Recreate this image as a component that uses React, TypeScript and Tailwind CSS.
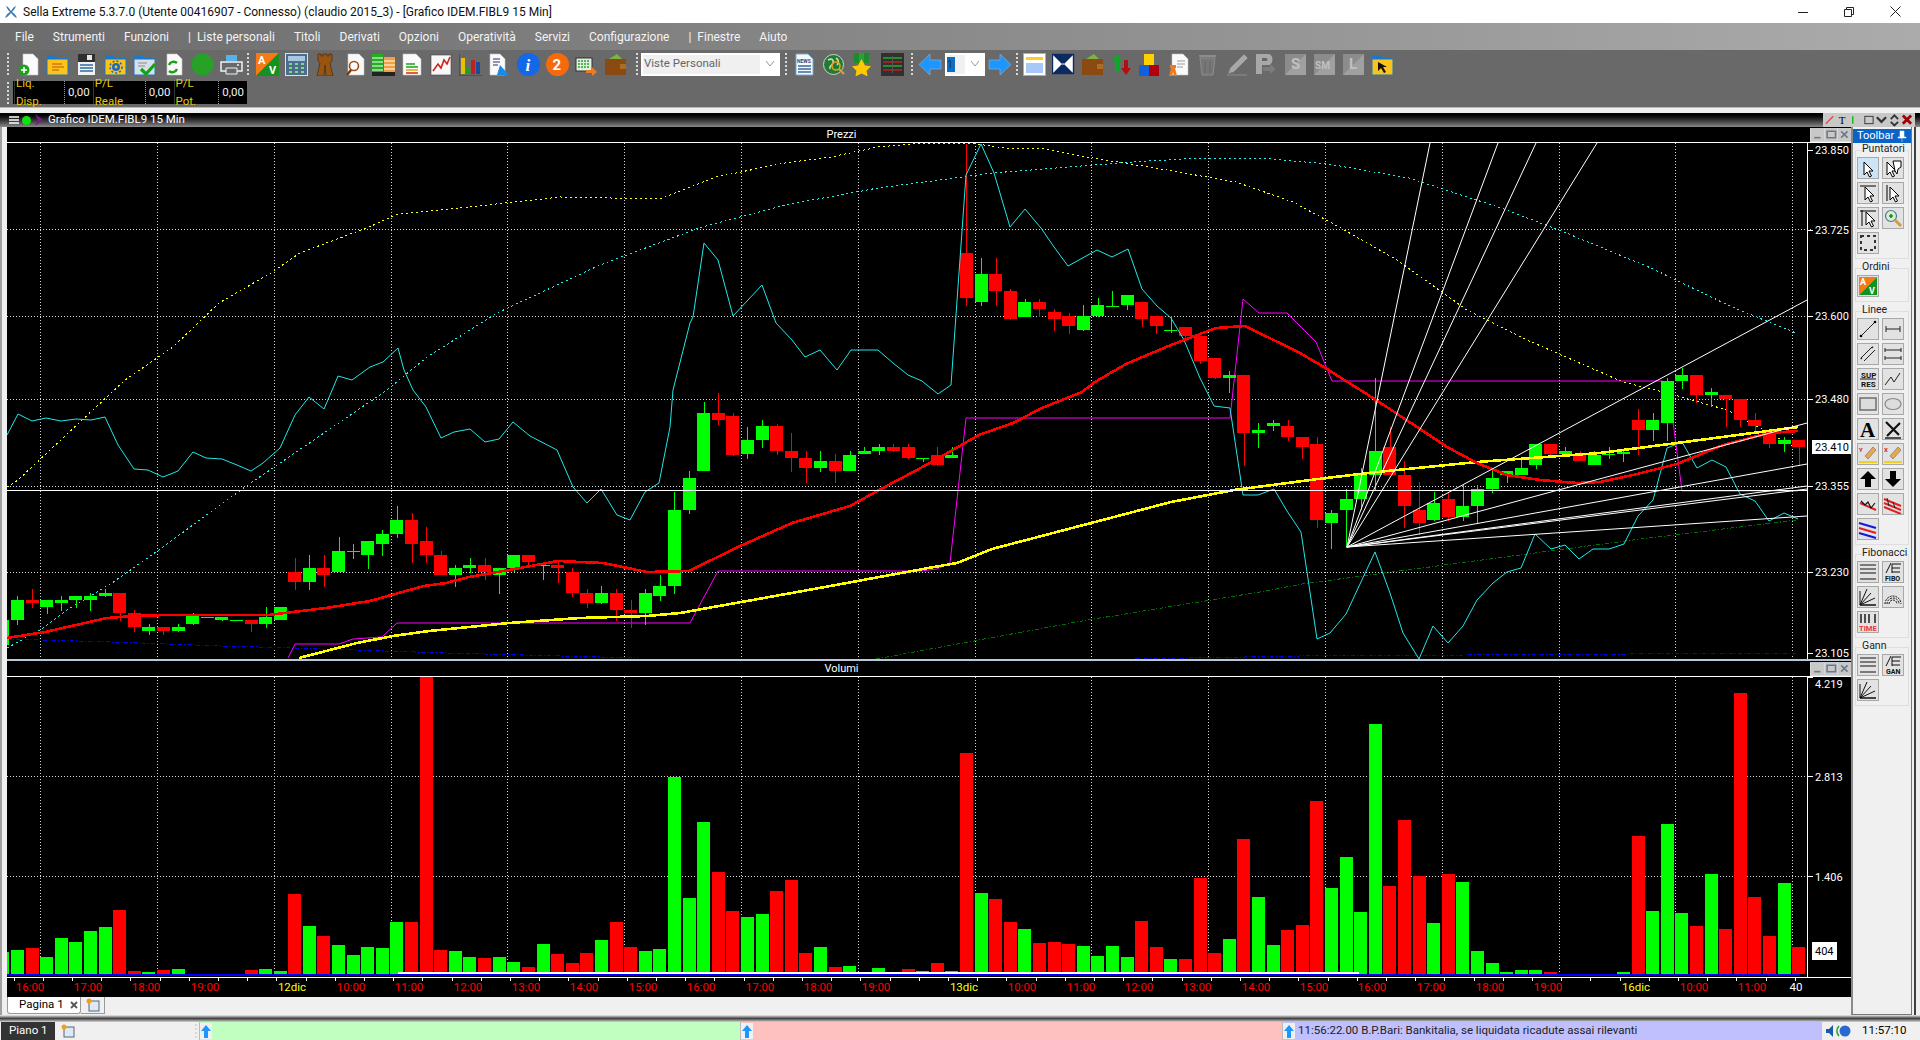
import type { ReactNode } from "react";

const GREEN = "#00ff00";
const RED = "#ff0000";

// candle rows: [green, bodyTop, bodyBottom, wickTop, wickBottom], each block measured from its own y origin
type Row = [number, number, number, number, number];

const rowsA: Row[] = [
  [1, 720, 795, 720, 795], [1, 660, 720, 648, 735], [0, 660, 669, 627, 684], [1, 660, 681, 660, 702],
  [1, 660, 669, 648, 693], [1, 648, 660, 648, 684], [1, 648, 660, 640, 693], [1, 640, 648, 627, 650],
  [0, 639, 699, 639, 723], [0, 699, 741, 690, 755], [1, 741, 753, 732, 765], [0, 741, 753, 741, 765],
  [1, 741, 753, 732, 755], [1, 702, 732, 699, 735], [1, 711, 714, 711, 714], [1, 711, 720, 711, 723],
  [1, 720, 723, 720, 723], [0, 720, 732, 720, 756], [1, 711, 732, 681, 744], [1, 681, 720, 681, 720],
  [0, 576, 606, 534, 630], [1, 564, 606, 525, 630], [0, 564, 585, 525, 621], [1, 513, 576, 471, 577],
  [1, 513, 516, 492, 537], [1, 483, 525, 483, 567], [1, 462, 492, 450, 528], [1, 420, 462, 378, 474],
  [0, 420, 492, 399, 549], [0, 483, 525, 441, 549], [0, 525, 585, 513, 585], [1, 564, 585, 555, 621],
  [1, 555, 564, 534, 579], [0, 555, 576, 534, 600], [1, 564, 585, 564, 642], [1, 525, 564, 525, 576],
  [0, 525, 546, 525, 561], [1, 555, 558, 546, 600], [0, 555, 564, 546, 609], [0, 576, 639, 564, 651],
  [0, 639, 669, 627, 684], [1, 639, 669, 618, 672], [0, 639, 690, 627, 723], [0, 690, 699, 660, 744],
  [1, 639, 699, 627, 735], [1, 618, 648, 585, 663], [1, 390, 618, 336, 642], [1, 294, 390, 273, 402],
];

const rowsB: Row[] = [
  [1, 822, 990, 790, 990], [0, 822, 842, 762, 855], [0, 830, 942, 822, 945], [1, 900, 941, 860, 955],
  [1, 859, 900, 842, 923], [0, 859, 931, 852, 942], [0, 932, 952, 880, 992], [0, 952, 981, 932, 1025],
  [1, 961, 981, 932, 992], [0, 961, 990, 941, 1025], [1, 942, 990, 932, 990], [1, 932, 941, 920, 941],
  [1, 920, 932, 910, 942], [0, 920, 932, 912, 935], [0, 920, 952, 912, 955], [1, 952, 955, 952, 962],
  [0, 942, 972, 920, 975], [1, 942, 951, 920, 950], [0, 357, 487, 40, 510], [1, 418, 498, 370, 510],
  [0, 418, 467, 370, 510], [0, 467, 549, 460, 550], [1, 499, 541, 490, 541], [0, 499, 520, 490, 543],
  [0, 528, 549, 518, 583], [0, 540, 569, 530, 592], [1, 540, 581, 508, 583], [1, 508, 540, 488, 541],
  [1, 509, 511, 467, 511], [1, 479, 508, 479, 522], [0, 499, 549, 499, 572], [0, 540, 569, 540, 592],
  [1, 581, 583, 540, 590], [0, 570, 598, 570, 610], [0, 598, 671, 598, 680], [0, 660, 720, 660, 723],
  [1, 711, 720, 700, 762], [0, 711, 880, 711, 975], [1, 871, 880, 851, 922], [1, 851, 858, 842, 873],
  [0, 859, 891, 842, 902],
];

const rowsC: Row[] = [
  [0, 292, 320, 292, 357], [0, 312, 540, 292, 563], [1, 519, 549, 510, 627], [1, 477, 510, 448, 625],
  [1, 405, 477, 385, 510], [1, 333, 405, 114, 450], [0, 321, 405, 260, 405], [0, 405, 498, 363, 564],
  [0, 510, 549, 427, 585], [1, 489, 540, 457, 543], [0, 477, 531, 456, 543], [1, 498, 531, 435, 543],
  [1, 447, 498, 436, 548], [1, 414, 447, 392, 460], [1, 393, 405, 393, 430], [1, 384, 405, 360, 405],
  [1, 312, 375, 312, 387], [0, 312, 342, 312, 348], [1, 333, 342, 321, 342], [0, 342, 363, 333, 363],
  [1, 345, 375, 333, 375], [1, 342, 345, 321, 356], [1, 336, 342, 333, 366], [0, 240, 270, 207, 345],
  [1, 240, 270, 219, 303], [1, 124, 249, 114, 303], [1, 105, 123, 84, 147], [0, 105, 165, 105, 189],
  [1, 156, 165, 144, 201], [0, 165, 177, 165, 261], [0, 177, 240, 177, 261], [0, 240, 258, 219, 276],
  [0, 282, 312, 270, 324], [1, 300, 312, 291, 336], [0, 300, 321, 300, 378],
];

const scaleRows = (rows: Row[], base: number, k: number) =>
  rows.map(([g, a, b, c, d]) => [g, base + a / k, base + b / k, base + c / k, base + d / k] as Row);

const candles = [...scaleRows(rowsA, 380, 3), ...scaleRows(rowsB, 130, 2.9), ...scaleRows(rowsC, 340, 3)];
const barX = (i: number) => 17.4 + 14.6 * i;

// volumes, first one is the clipped bar at the left edge; negative = red, 0 = no bar
const volumes = [
  876, 870, -864, 891, 834, 846, 813, 801, -750, -933, 936, -930, 927, 0, 0, 0, 0, -930, 927, 933, -702, 798, -828, 855,
  885, 861, 864, 786, -786, -50, -870, 873, 891, -894, 891, 906, -921, 852, -882, -909, -879, 840, -786, -861, 873, 867,
  351, 714, 486, -636, -753, 771, 762, -693, -660, -879, 861, -921, 918, 936, 924, -936, -927, 933, -909, 933, -279, 699,
  -717, -786, 807, -849, -846, -852, 858, 888, 858, 891, -783, -861, 897, -897, -654, -879, 837, -537, 711, 855, -810,
  -795, -423, 684, 591, 756, 192, -678, -480, -648, 789, -642, 666, 873, 909, 936, 930, 930, -936, 0, 0, 0, 0, 936, -528,
  753, 492, 759, -798, 642, -807, -99, -711, -828, 669, -861,
];

const gridX = Array.from({ length: 16 }, (_, i) => 40.6 + 116.8 * i);
const priceGrid = [229, 316.5, 399, 486, 572];
const priceTicks: [number, string][] = [
  [150, "23.850"], [230, "23.725"], [316, "23.600"], [399, "23.480"], [486, "23.355"], [572, "23.230"], [653, "23.105"],
];

const timeLabels: [number, string, string][] = [
  [30, "16:00", RED], [88, "17:00", RED], [146, "18:00", RED], [205, "19:00", RED], [292, "12dic", "#ffff00"],
  [351, "10:00", RED], [409, "11:00", RED], [468, "12:00", RED], [526, "13:00", RED], [584, "14:00", RED],
  [643, "15:00", RED], [701, "16:00", RED], [760, "17:00", RED], [818, "18:00", RED], [876, "19:00", RED],
  [964, "13dic", "#ffff00"], [1022, "10:00", RED], [1081, "11:00", RED], [1139, "12:00", RED], [1197, "13:00", RED],
  [1256, "14:00", RED], [1314, "15:00", RED], [1372, "16:00", RED], [1431, "17:00", RED], [1490, "18:00", RED],
  [1548, "19:00", RED], [1636, "16dic", "#ffff00"], [1694, "10:00", RED], [1752, "11:00", RED], [1796, "40", "#ffffff"],
];

const cyanLine =
  "7,435 18,414 32,421 46,418 61,421 76,419 91,420 105,417 118,445 134,469 148,470 163,477 178,471 193,452 206,458 222,459 237,465 251,471 263,463 280,448 295,415 309,397 324,409 333,388 338,376 352,380 370,367 383,362 398,348 404,370 413,390 426,407 441,438 454,432 470,429 485,442 499,439 513,422 530,436 557,450 573,487 587,503 601,489 617,515 630,520 645,492 659,483 670,427 673,390 690,323 693,317 704,243 718,260 733,316 762,285 776,323 792,340 805,357 820,350 837,370 851,350 878,350 893,363 908,375 922,381 938,394 951,385 966,175 981,144 994,173 1010,227 1025,209 1041,228 1054,247 1068,266 1097,250 1112,257 1128,249 1142,289 1157,306 1171,318 1184,340 1200,378 1214,406 1230,408 1243,495 1258,495 1274,489 1287,511 1301,532 1317,639 1330,633 1346,614 1375,552 1390,593 1403,633 1419,659 1433,626 1448,643 1463,626 1477,600 1493,583 1507,572 1521,568 1535,534 1551,549 1565,545 1579,559 1593,549 1609,549 1624,544 1638,516 1653,500 1667,448 1682,442 1697,468 1712,460 1726,467 1740,494 1755,501 1769,521 1784,513 1798,519";
const redLine =
  "7,638 45,632 107,618 134,616 165,615 268,615 326,608 370,601 424,586 446,583 469,577 509,570 558,561 603,563 647,572 689,571 738,547 792,523 850,506 881,489 930,463 979,435 1013,423 1042,408 1082,392 1095,382 1126,364 1171,345 1216,328 1245,326 1300,353 1327,369 1373,398 1417,427 1447,447 1477,463 1507,475 1540,480 1577,483 1600,482 1633,475 1677,464 1723,445 1769,433 1798,431";
const yellowLine =
  "299,658 357,643 393,636 429,631 509,623 580,618 647,616 680,613 814,589 934,567 957,563 992,549 1095,522 1171,502 1234,490 1318,479 1377,472 1477,462 1600,453 1677,443 1798,427";
const magentaLine =
  "288,658 295,644 339,644 353,639 382,637 397,623 690,623 718,571 921,571 937,569 950,563 966,418 1230,418 1243,299 1259,313 1287,313 1316,342 1332,381 1662,381 1668,383 1682,491 1798,491";
const yellowDots =
  "7,487 18,480 125,380 173,347 219,303 271,273 300,253 369,227 398,214 450,209 560,197 660,199 716,177 785,163 831,157 878,147 924,143 970,143 1005,148 1045,149 1074,155 1155,168 1236,182 1293,202 1339,227 1397,260 1467,310 1527,340 1623,382 1667,393 1727,410 1760,428 1793,446";
const cyanDots =
  "7,648 40,630 67,610 112,583 156,552 245,487 387,390 427,357 497,313 600,265 699,228 785,205 878,188 993,173 1132,162 1201,158 1259,158 1328,164 1409,178 1501,208 1559,230 1651,268 1732,307 1796,333";
const blueDots = "7,639 112,642 223,646 290,648 446,653 638,658 M1135,659 1300,656 1797,653";
const greenDots = "876,659 1082,621 1260,592 1302,584 1467,562 1633,540 1797,520";
const fanEnds = [
  [1430, 143], [1498, 143], [1536, 143], [1597, 143], [1807, 300], [1807, 423], [1807, 464], [1807, 486], [1807, 489], [1807, 516],
];

function PriceChart() {
  return (
    <svg width={1844} height={516} viewBox="7 143 1844 516" className="block bg-black" shapeRendering="crispEdges">
      {priceGrid.map((y) => (
        <line key={y} x1={7} x2={1813} y1={y} y2={y} stroke="#d8d8d8" strokeDasharray="1 2" />
      ))}
      {gridX.map((x) => (
        <line key={x} x1={x} x2={x} y1={143} y2={659} stroke="#d8d8d8" strokeDasharray="1 2" />
      ))}
      <polyline points={blueDots.split(" M")[0]} fill="none" stroke="#0000ff" strokeDasharray="4 2 1 2" />
      <polyline points={blueDots.split(" M")[1]} fill="none" stroke="#0000ff" strokeDasharray="4 2 1 2" />
      <polyline points={greenDots} fill="none" stroke="#007000" strokeDasharray="4 2 1 2" />
      <polyline points={yellowDots} fill="none" stroke="#ffff00" strokeDasharray="2 3" />
      <polyline points={cyanDots} fill="none" stroke="#20f0f0" strokeDasharray="2 3" />
      <polyline points={magentaLine} fill="none" stroke="#ff00ff" shapeRendering="auto" />
      {candles.map(([g, top, bot, wt, wb], n) => {
        const x = barX(n - 1);
        const color = g ? GREEN : RED;
        return (
          <g key={n}>
            <rect x={Math.round(x)} y={wt} width={1} height={wb - wt} fill={color} />
            <rect x={Math.round(x - 6.5)} y={top} width={13} height={Math.max(bot - top, 1)} fill={color} />
          </g>
        );
      })}
      <polyline points={cyanLine} fill="none" stroke="#20e8e8" strokeWidth={1} shapeRendering="auto" />
      <polyline points={yellowLine} fill="none" stroke="#ffff00" strokeWidth={2.6} />
      <polyline points={redLine} fill="none" stroke={RED} strokeWidth={2.6} />
      {fanEnds.map(([x, y]) => (
        <line key={`${x}-${y}`} x1={1347} y1={547} x2={x} y2={y} stroke="#ffffff" shapeRendering="auto" />
      ))}
      <line x1={7} x2={1807} y1={490} y2={490} stroke="#ffffff" />
      <line x1={1807} x2={1807} y1={143} y2={659} stroke="#ffffff" />
      {priceTicks.map(([y, label]) => (
        <g key={label}>
          <line x1={1807} x2={1813} y1={y} y2={y} stroke="#ffffff" />
          <text x={1815} y={y + 4} fill="#ffffff" fontSize={11} shapeRendering="auto">
            {label}
          </text>
        </g>
      ))}
      <rect x={1812} y={440} width={39} height={14} fill="#ffffff" />
      <text x={1815} y={451} fill="#000000" fontSize={11}>
        23.410
      </text>
    </svg>
  );
}

function VolumeChart() {
  return (
    <svg width={1844} height={320} viewBox="7 677 1844 320" className="block bg-black" shapeRendering="crispEdges">
      {[776, 876].map((y) => (
        <line key={y} x1={7} x2={1813} y1={y} y2={y} stroke="#d8d8d8" strokeDasharray="1 2" />
      ))}
      {gridX.map((x) => (
        <line key={x} x1={x} x2={x} y1={677} y2={973} stroke="#d8d8d8" strokeDasharray="1 2" />
      ))}
      {volumes.map((v, n) => {
        if (v === 0) return null;
        const top = 660 + Math.abs(v) / 3;
        return (
          <rect key={n} x={Math.round(barX(n - 1) - 6.5)} y={top} width={13} height={974 - top} fill={v > 0 ? GREEN : RED} />
        );
      })}
      <rect x={398} y={972} width={961} height={2} fill="#ffffff" />
      <rect x={7} y={974} width={1793} height={2} fill="#0000ff" />
      <line x1={1807} x2={1807} y1={677} y2={977} stroke="#ffffff" />
      <line x1={7} x2={1851} y1={977.5} y2={977.5} stroke="#ffffff" />
      {[[684, "4.219"], [777, "2.813"], [877, "1.406"]].map(([y, label]) => (
        <g key={label}>
          <line x1={1807} x2={1813} y1={(y as number) - (y === 684 ? 7 : 1)} y2={(y as number) - (y === 684 ? 7 : 1)} stroke="#ffffff" />
          <text x={1815} y={(y as number) + 4} fill="#ffffff" fontSize={11}>
            {label}
          </text>
        </g>
      ))}
      <rect x={1812} y={942} width={25} height={18} fill="#ffffff" />
      <text x={1815} y={955} fill="#000000" fontSize={11}>
        404
      </text>
      {Array.from({ length: 62 }, (_, i) => 14 + 29.2 * i).map((x) => (
        <line key={x} x1={x} x2={x} y1={978} y2={981} stroke="#ffffff" />
      ))}
      {timeLabels.map(([x, label, color]) => (
        <text key={`${x}${label}`} x={x} y={991} textAnchor="middle" fill={color} fontSize={11.5}>
          {label}
        </text>
      ))}
    </svg>
  );
}

function Grip({ h = 22 }: { h?: number }) {
  return <div className="w-[3px] shrink-0 border-l-2 border-dotted border-[#d8d8d8]" style={{ height: h }} />;
}

const Doc = ({ x = 4, w = 14 }: { x?: number; w?: number }) => (
  <path d={`M${x} 1h${w - 5}l5 5v16h-${w}z`} fill="#fafafa" stroke="#c8c8c8" strokeWidth="0.6" />
);

const Folder = ({ front = "#fcc419" }: { front?: string }) => (
  <>
    <path d="M1 5V2h8l2 3h10v4H1z" fill="#1c79c8" />
    <rect x="1" y="6" width="21" height="16" fill={front} stroke="#1c79c8" />
  </>
);

const Wallet = () => (
  <>
    <path d="M5 6l8-5 5 5z" fill="#7cb342" />
    <rect x="1" y="6" width="21" height="16" fill="#8b4a12" />
    <rect x="16" y="11" width="6" height="5" fill="#b06a28" />
  </>
);

const Shade = ({ c, t }: { c: string; t: string }) => (
  <>
    <rect x="1" y="1" width="21" height="21" fill="#8c8c8c" />
    <path d="M22 1v21H1z" fill="#a0a0a0" />
    <text x={t === "SM" ? 2 : 7} y="16" fontSize={t === "SM" ? 10 : 15} fontWeight={700} fill={c}>
      {t}
    </text>
  </>
);

const icons: Record<string, ReactNode> = {
  newDoc: (
    <>
      <Doc x={6} w={15} />
      <circle cx="7" cy="17" r="5.5" fill="#1fa01f" />
      <path d="M7 14v6M4 17h6" stroke="#fff" strokeWidth="1.6" />
    </>
  ),
  folder: (
    <>
      <Folder />
      <path d="M6 11h10M6 14h12M6 17h7" stroke="#d07a10" strokeWidth="1.4" />
    </>
  ),
  save: (
    <>
      <path d="M3 1h17v8H3z" fill="#2f2f2f" />
      <rect x="12" y="2" width="5" height="5" fill="#e8e8e8" />
      <rect x="3" y="9" width="17" height="13" fill="#f2f2f2" />
      <path d="M5 12h13M5 15h13M5 18h13" stroke="#2f6aa8" strokeWidth="1.6" />
    </>
  ),
  folderGear: (
    <>
      <Folder />
      <circle cx="12" cy="14" r="4" fill="#1c6ac0" />
      <circle cx="12" cy="14" r="6" fill="none" stroke="#1c6ac0" strokeWidth="1.6" strokeDasharray="2 2" />
      <circle cx="12" cy="14" r="1.4" fill="#fcc419" />
    </>
  ),
  folderCheck: (
    <>
      <Folder front="#d8dfe6" />
      <path d="M5 10h9M5 13h7" stroke="#8a8a8a" />
      <path d="M8 16l5 5 9-10" fill="none" stroke="#15a315" strokeWidth="3.2" />
    </>
  ),
  docRefresh: (
    <>
      <Doc x={5} w={15} />
      <path d="M7 12a5 5 0 0 1 8-2M15 16a5 5 0 0 1-8 2" fill="none" stroke="#15a315" strokeWidth="2.4" />
    </>
  ),
  circle: <circle cx="11.5" cy="11.5" r="11" fill="#27a127" />,
  printer: (
    <>
      <path d="M6 2h11v6H6z" fill="#5ab0e8" />
      <path d="M1 9h21v9H1z" fill="none" stroke="#eef4f8" strokeWidth="1.5" />
      <path d="M6 15h11v6H6z" fill="#6a6a6a" stroke="#eef4f8" />
      <circle cx="18" cy="12" r="1" fill="#eef4f8" />
    </>
  ),
  av: (
    <>
      <path d="M0 0h23L0 23z" fill="#f47b16" />
      <path d="M23 0v23H0z" fill="#15911f" />
      <text x="2" y="11" fontSize="11" fontWeight="700" fill="#fff">A</text>
      <text x="13" y="21" fontSize="11" fontWeight="700" fill="#fff">V</text>
    </>
  ),
  calc: (
    <>
      <rect x="0.5" y="0.5" width="22" height="22" fill="#4c6d8c" stroke="#d5e3ee" />
      <rect x="3" y="3" width="17" height="5" fill="#a8c6de" />
      <path d="M4 11h3M10 11h3M16 11h3M4 15h3M10 15h3M16 15h3M4 19h3M10 19h3M16 19h3" stroke="#7adf7a" strokeWidth="2.2" />
    </>
  ),
  tower: (
    <path d="M4 1h3v2h2V1h4v2h2V1h3v7l-2 2 3 13h-7l-1-11-1 11H3l3-13-2-2z" fill="#9a5412" stroke="#3a2208" strokeWidth="0.6" />
  ),
  docLens: (
    <>
      <Doc x={5} w={16} />
      <circle cx="11" cy="13" r="4.5" fill="#fff" stroke="#a04a10" strokeWidth="1.6" />
      <path d="M8 17l-4 5" stroke="#7a3a08" strokeWidth="2.4" />
    </>
  ),
  table: (
    <>
      <rect x="0" y="1" width="11" height="18" fill="#22b022" />
      <rect x="12" y="4" width="11" height="15" fill="#f0a040" />
      <path d="M0 5h11M0 9h11M0 13h11M0 17h11M12 8h11M12 12h11M12 16h11" stroke="#fff" />
      <rect x="0" y="19" width="23" height="4" fill="#222" />
    </>
  ),
  docLines: (
    <>
      <Doc x={2} w={18} />
      <path d="M5 11h9M5 14h12" stroke="#1fa01f" strokeWidth="1.6" />
      <path d="M5 17h12" stroke="#e8b000" strokeWidth="1.6" />
      <path d="M5 20h12" stroke="#e03020" strokeWidth="1.6" />
    </>
  ),
  lineChart: (
    <>
      <rect x="1" y="2" width="20" height="20" fill="#f8f8f8" stroke="#444" strokeWidth="0.6" />
      <path d="M3 18l5-7 3 4 3-8 3 4 3-7" fill="none" stroke="#d02020" strokeWidth="1.6" />
    </>
  ),
  bars: (
    <>
      <rect x="2" y="5" width="4" height="16" fill="#e8c000" />
      <rect x="7" y="15" width="4" height="6" fill="#1fa01f" />
      <rect x="12" y="7" width="4" height="14" fill="#c02020" />
      <rect x="17" y="9" width="4" height="12" fill="#1a4a9a" />
      <path d="M0 1v22h23" fill="none" stroke="#3a3a3a" />
    </>
  ),
  docArrow: (
    <>
      <Doc x={2} w={15} />
      <path d="M5 6h7M5 9h7M5 12h5" stroke="#2a2a6a" strokeWidth="1.2" />
      <path d="M12 12l9 10H9z" fill="#1e88e5" />
    </>
  ),
  info: (
    <>
      <circle cx="11.5" cy="11.5" r="11.5" fill="#1268e8" />
      <text x="8.5" y="18" fontSize="17" fontStyle="italic" fontWeight="700" fill="#fff" fontFamily="Liberation Serif">i</text>
    </>
  ),
  two: (
    <>
      <circle cx="11.5" cy="11.5" r="11.5" fill="#f46a0c" />
      <text x="6.5" y="17" fontSize="15" fontWeight="700" fill="#fff">2</text>
    </>
  ),
  money: (
    <>
      <rect x="1" y="5" width="16" height="13" fill="#e0f0e0" stroke="#333" />
      <path d="M3 8h12M3 11h12M3 14h12" stroke="#2aa02a" strokeWidth="1.6" strokeDasharray="2 1" />
      <path d="M11 17h6v-3l5 5-5 4v-3h-6z" fill="#f07a20" />
    </>
  ),
  wallet: <Wallet />,
  news: (
    <>
      <path d="M2 1h12l5 5v16H2z" fill="#f4f8fc" stroke="#7aa8d0" />
      <text x="3" y="10" fontSize="5" fontWeight="700" fill="#446">NEWS</text>
      <path d="M4 13h13M4 16h13M4 19h13" stroke="#3a6a98" strokeWidth="1.4" />
    </>
  ),
  globe: (
    <>
      <circle cx="10.5" cy="11.5" r="10" fill="#1f7a33" stroke="#c8d8c8" />
      <path d="M5 7c4-2 6 0 5 3s-4 2-3 6M13 5c3 2 3 5 1 7" fill="none" stroke="#d8d8b0" strokeWidth="1.6" />
      <circle cx="13" cy="13" r="4" fill="none" stroke="#e0a020" strokeWidth="1.6" />
      <path d="M16 16l5 5" stroke="#e0a020" strokeWidth="2.2" />
    </>
  ),
  medal: (
    <>
      <path d="M2 0h5v10H2zM12 0h5v10h-5z" fill="#1f8a2a" />
      <path d="M7 0h5v10H7z" fill="#2aa03a" />
      <path d="M9.5 6l3.5 6.5 6 .8-4.400 4.400 1 5.800-6.100-3-6.100 3 1-5.800L0 13.300l6-.8z" fill="#ffc800" />
    </>
  ),
  list: (
    <>
      <rect x="0" y="0" width="23" height="23" fill="#303030" />
      <path d="M2 5h19M2 13h19" stroke="#1fb01f" strokeWidth="1.6" />
      <path d="M2 9h19M2 17h19" stroke="#c02020" strokeWidth="1.6" />
      <path d="M11.500 3v17" stroke="#555" />
    </>
  ),
  back: <path d="M0 11.500L11 1v6h11v9H11v6z" fill="#1e96ff" stroke="#a8b0b8" strokeWidth="0.6" />,
  forward: <path d="M23 11.500L12 1v6H1v9h11v6z" fill="#1e96ff" stroke="#a8b0b8" strokeWidth="0.6" />,
  window: (
    <>
      <rect x="0.500" y="0.500" width="22" height="22" fill="#ffffff" stroke="#8ab4e8" />
      <rect x="3" y="4" width="17" height="3" fill="#ffcc20" />
      <rect x="3" y="10" width="17" height="10" fill="#a8c8f8" />
    </>
  ),
  mail: (
    <>
      <rect x="0.500" y="1.500" width="21" height="19" fill="#ffffff" stroke="#0a2a60" strokeWidth="1.400" />
      <path d="M1 2l10 10L21 2M1 20l10-10 10 10" fill="#0a2a60" />
    </>
  ),
  arrows: (
    <>
      <path d="M7 1l5 7H9v10H5V8H2z" fill="#0da82a" />
      <path d="M16 22l5-7h-3V7h-4v8h-3z" fill="#b01010" />
    </>
  ),
  blocks: (
    <>
      <rect x="5" y="1" width="10" height="11" fill="#ffd000" />
      <rect x="0" y="12" width="10" height="11" fill="#1060e0" />
      <rect x="10" y="12" width="10" height="11" fill="#b00010" />
    </>
  ),
  docFigure: (
    <>
      <Doc x={4} w={16} />
      <path d="M9 8h8M9 11h8M9 14h6" stroke="#999" />
      <path d="M2 12h6v3H7l2 8H6l-1-4-1 4H1l2-8H2z" fill="#f07a20" />
    </>
  ),
  trash: (
    <>
      <path d="M3 5h15l-2 17H5z" fill="#777" stroke="#8c8c8c" />
      <path d="M2 3h17" stroke="#8c8c8c" strokeWidth="2" />
      <path d="M8 8v12M13 8v12" stroke="#666" />
    </>
  ),
  pencil: (
    <>
      <path d="M18 1l4 4L8 19l-6 2 2-6z" fill="#a8a8a8" stroke="#777" />
      <path d="M1 22h20" stroke="#8c8c8c" />
    </>
  ),
  pGray: (
    <>
      <path d="M1 1h12c6 0 6 11 0 11H7v9H1z" fill="#a8a8a8" />
      <path d="M7 5h4c2 0 2 3 0 3H7z" fill="#666" />
      <path d="M8 14h7v-3l6 5-6 5v-3H8z" fill="#7c7c7c" />
    </>
  ),
  sGray: <Shade c="#c0c0c0" t="S" />,
  smGray: <Shade c="#c0c0c0" t="SM" />,
  lGray: <Shade c="#c0c0c0" t="L" />,
  folderArrow: (
    <>
      <Folder />
      <path d="M7 9v9l3-3 3 5 2-1-3-5h4z" fill="#111" />
    </>
  ),
};

function Tool({ name }: { name: string }) {
  return (
    <div className="flex h-[24px] w-[29px] shrink-0 items-center justify-center">
      <svg width={23} height={23} viewBox="0 0 23 23">
        {icons[name]}
      </svg>
    </div>
  );
}

function Combo({ label, wide }: { label: string; wide?: boolean }) {
  return (
    <div className={`flex h-[23px] shrink-0 items-center bg-white pl-[2px] ${wide ? "w-[139px]" : "w-[40px]"}`}>
      <div className={`flex h-[19px] flex-1 items-center bg-[#f0f0f0] text-[11.5px] text-[#666] ${wide ? "pl-[1px]" : ""}`}>
        {wide ? label : <span className="h-[15px] w-[8px] bg-[#0870c8] text-[11px] leading-[15px] text-[#333]">{label}</span>}
      </div>
      <svg width={20} height={10} viewBox="0 0 20 10" className="shrink-0">
        <path d="M6 2l4 5 4-5" fill="none" stroke="#999" />
      </svg>
    </div>
  );
}

function StripCell({ label, value }: { label: string; value: string }) {
  return (
    <>
      <div className="flex h-full items-center border-l border-[#303a3a] pl-[1px] pr-[4px] text-[#e8c800]">{label}</div>
      <div className="flex h-full items-center border-l border-dotted border-[#999] px-[3px] text-[#f0f0f0]">{value}</div>
    </>
  );
}

const Pointer = ({ x = 0 }: { x?: number }) => (
  <path
    transform={`translate(${x} 0)`}
    d="M6 4v13l3-3 2.500 5 2-1-2.500-5h4z"
    fill="#fff"
    stroke="#000"
    strokeWidth="1"
  />
);

const panel: Record<string, ReactNode> = {
  pointer: <Pointer />,
  pointerTip: (
    <>
      <Pointer x={-2} />
      <path d="M10 3h8v6l-3 2-1 5-2-3z" fill="#fff" stroke="#000" />
    </>
  ),
  pointerTop: (
    <>
      <path d="M2 3h16" stroke="#000" />
      <Pointer x={1} />
    </>
  ),
  pointerLeft: (
    <>
      <path d="M4 2v16" stroke="#000" />
      <Pointer x={1} />
    </>
  ),
  pointerCorner: (
    <>
      <path d="M2 3h16M4 2v16" stroke="#000" />
      <Pointer x={2} />
    </>
  ),
  zoom: (
    <>
      <circle cx="8" cy="8" r="5.500" fill="#d8ecd8" stroke="#4a7a90" strokeWidth="1.200" />
      <path d="M6 8h4M8 6v4" stroke="#109010" strokeWidth="1.600" />
      <path d="M12 12l6 6" stroke="#d89a40" strokeWidth="3" />
    </>
  ),
  select: <rect x="3" y="3" width="14" height="14" fill="none" stroke="#333" strokeWidth="2" strokeDasharray="3 3" />,
  av: (
    <>
      <path d="M1 1h18L1 19z" fill="#f47b16" />
      <path d="M19 1v18H1z" fill="#15911f" />
      <text x="2" y="9" fontSize="9" fontWeight="700" fill="#fff">A</text>
      <text x="11" y="18" fontSize="9" fontWeight="700" fill="#fff">V</text>
    </>
  ),
  line: (
    <>
      <path d="M3 17L17 3" stroke="#222" />
      <circle cx="3" cy="17" r="1.300" fill="#000" />
      <circle cx="17" cy="3" r="1.300" fill="#000" />
    </>
  ),
  hline: <path d="M3 10h14M3 7v6M17 7v6" stroke="#222" fill="none" />,
  channel: (
    <>
      <path d="M3 14L14 3M6 17L17 6" stroke="#222" />
      <path d="M3 14l3 3M14 3l3 3" stroke="#000" strokeWidth="2" strokeDasharray="1 4" />
    </>
  ),
  hchannel: <path d="M2 6h16M2 14h16M2 4v4M18 4v4M2 12v4M18 12v4" stroke="#222" fill="none" />,
  supres: (
    <>
      <text x="3" y="9" fontSize="8" fontWeight="700" fill="#111">SUP</text>
      <path d="M2 10h16" stroke="#111" />
      <text x="3" y="18" fontSize="8" fontWeight="700" fill="#111">RES</text>
    </>
  ),
  zig: <path d="M2 16l6-8 3 5 6-9" fill="none" stroke="#222" />,
  rect: <rect x="2" y="4" width="16" height="12" fill="#dcdcdc" stroke="#666" strokeWidth="1.400" />,
  ellipse: <ellipse cx="10" cy="10" rx="8" ry="5.500" fill="#dcdcdc" stroke="#888" strokeWidth="1.200" />,
  bigA: <text x="2" y="18" fontSize="21" fontWeight="900" fill="#000" fontFamily="Liberation Serif">A</text>,
  cross: (
    <>
      <path d="M3 3l13 13M17 4L4 17" stroke="#111" strokeWidth="2.200" />
      <path d="M2 19h16" stroke="#111" strokeWidth="1.400" />
    </>
  ),
  eraseY: (
    <>
      <path d="M7 12l8-9 3 3-8 9z" fill="#e8a850" stroke="#555" strokeWidth="0.500" />
      <path d="M1 18h18" stroke="#f0d020" strokeWidth="2" />
      <text x="1" y="8" fontSize="6" fontWeight="700" fill="#d02020">Y</text>
    </>
  ),
  eraseX: (
    <>
      <path d="M7 12l8-9 3 3-8 9z" fill="#e8a850" stroke="#555" strokeWidth="0.500" />
      <path d="M1 18h18" stroke="#f0d020" strokeWidth="2" />
      <text x="1" y="8" fontSize="6" fontWeight="700" fill="#d02020">X</text>
    </>
  ),
  up: <path d="M10 2l8 8h-5v8H7v-8H2z" fill="#000" />,
  down: <path d="M10 18l8-8h-5V2H7v8H2z" fill="#000" />,
  wave: (
    <>
      <path d="M2 9l16 7" stroke="#e02020" strokeWidth="2" />
      <path d="M3 7l4 4 3-3 3 6 4-5" fill="none" stroke="#111" strokeWidth="1.200" />
    </>
  ),
  redBands: (
    <>
      <path d="M1 5l17 7M1 9l17 7M1 13l17 7" stroke="#e02020" strokeWidth="2" />
      <path d="M4 4l2 8M10 8l2 6" stroke="#222" />
    </>
  ),
  blueBands: (
    <>
      <path d="M1 4l17 5M1 14l17 5" stroke="#1018e0" strokeWidth="2" />
      <path d="M1 9l17 5" stroke="#e02020" strokeWidth="2" />
    </>
  ),
  levels: <path d="M2 3h16M2 7h16M2 11h16M2 17h16" stroke="#111" />,
  fibo: (
    <>
      <path d="M3 11L8 1M9 2v9M9 2h9M9 6h8M9 10h8" stroke="#111" fill="none" />
      <text x="2" y="19" fontSize="7" fontWeight="700" fill="#111">FIBO</text>
    </>
  ),
  gan: (
    <>
      <path d="M3 11L8 1M9 2v9M9 2h9M9 6h8M9 10h8" stroke="#111" fill="none" />
      <text x="3" y="19" fontSize="7" fontWeight="700" fill="#111">GAN</text>
    </>
  ),
  fan: <path d="M2 18L9 2M2 18l11-12M2 18l15-7M2 18h16M2 18h16M2 4v14" stroke="#111" fill="none" />,
  arcs: <path d="M2 17a8 8 0 0 1 16 0M4 17a6 6 0 0 1 12 0M6 17a4 4 0 0 1 8 0" stroke="#111" fill="none" strokeDasharray="2 1" />,
  time: (
    <>
      <path d="M3 2v9M7 2v9M11 2v9M17 2v9" stroke="#111" strokeWidth="1.400" />
      <text x="1" y="19" fontSize="7.500" fontWeight="700" fill="#f03040">TIME</text>
    </>
  ),
};

function PanelButton({ name, active }: { name: string; active?: boolean }) {
  return (
    <div
      className={`flex h-[22px] w-[22px] items-center justify-center border border-[#a8a8a8] ${
        active ? "border-[#2a70c0] bg-[#cde4f7]" : "bg-[#e2e2e2]"
      }`}
    >
      <svg width={20} height={20} viewBox="0 0 20 20">
        {panel[name]}
      </svg>
    </div>
  );
}

function Group({ title, names, active }: { title: string; names: string[]; active?: string }) {
  return (
    <fieldset className="mb-[2px] ml-[2px] mr-[2px] border border-[#dedede] pb-[4px] pl-[1px]">
      <legend className="ml-[5px] h-[14px] text-[10.5px] leading-[12px] text-[#222]">{title}</legend>
      <div className="grid grid-cols-[22px_22px] gap-[3px]">
        {names.map((n) => (
          <PanelButton key={n} name={n} active={n === active} />
        ))}
      </div>
    </fieldset>
  );
}

function ChartHeader({ title }: { title: string }) {
  return (
    <div className="flex h-[16px] items-center border-b border-white bg-black text-[11px] text-white">
      <div className="flex-1 pr-[134px] text-center leading-[14px]">{title}</div>
      <div className="flex h-[14px] w-[41px] gap-[1px] bg-[#d8d8d8] pl-[1px]">
        {["M3 9h6", "M2 3h8v6H2z", "M3 3l6 6M9 3l-6 6"].map((d) => (
          <svg key={d} width={13} height={13} viewBox="0 0 12 12" className="bg-[#c8c8c8]">
            <path d={d} fill="none" stroke="#6a7a8a" strokeWidth="1.500" />
          </svg>
        ))}
      </div>
    </div>
  );
}

const menuItems: [string, number][] = [
  ["File", 15], ["Strumenti", 19], ["Funzioni", 19], ["|", 19], ["Liste personali", 6], ["Titoli", 19], ["Derivati", 19],
  ["Opzioni", 19], ["Operatività", 19], ["Servizi", 19], ["Configurazione", 19], ["|", 19], ["Finestre", 6], ["Aiuto", 19],
];

export default function App() {
  return (
    <div className="flex h-[1040px] w-[1920px] flex-col overflow-hidden bg-[#f0f0f0] font-['Roboto',sans-serif] text-[12px]">
      {/* title bar */}
      <div className="flex h-[23px] shrink-0 items-center bg-white text-[#111]">
        <svg width={16} height={16} viewBox="0 0 16 16" className="ml-[3px] mr-[4px]">
          <path d="M3 2c3 1 4 4 5 5 1-1 2-4 5-5-1 3-3 5-4 6 2 1 4 3 5 6-3-1-5-4-6-5-1 1-3 4-6 5 1-3 3-5 5-6-1-1-3-3-4-6z" fill="#3a7ab8" />
        </svg>
        <span>Sella Extreme 5.3.7.0 (Utente 00416907 - Connesso) (claudio 2015_3) - [Grafico IDEM.FIBL9 15 Min]</span>
        <div className="ml-auto mr-[2px] flex">
          <div className="flex h-[23px] w-[46px] items-center justify-center">
            <svg width={10} height={10}><path d="M0 5.500h10" stroke="#222" /></svg>
          </div>
          <div className="flex h-[23px] w-[46px] items-center justify-center">
            <svg width={10} height={10}><path d="M.5 2.500h7v7h-7zM2.500 2.500v-2h7v7h-2" fill="none" stroke="#222" /></svg>
          </div>
          <div className="flex h-[23px] w-[46px] items-center justify-center">
            <svg width={11} height={11}><path d="M.5.500l10 10M10.500.500l-10 10" stroke="#222" /></svg>
          </div>
        </div>
      </div>

      {/* menu */}
      <div className="flex h-[27px] shrink-0 items-center bg-linear-to-r from-[#6c6c6c] to-[#ababab] text-[#f4f4f4]">
        {menuItems.map(([label, gap], i) => (
          <span key={i} style={{ marginLeft: gap }}>
            {label}
          </span>
        ))}
      </div>

      {/* toolbars */}
      <div className="flex h-[57px] shrink-0 flex-col bg-[#696969] pt-[1px]">
        <div className="flex h-[26px] items-center pl-[7px]">
          <Grip />
          <div className="ml-[4px] flex">
            {["newDoc", "folder", "save", "folderGear", "folderCheck", "docRefresh", "circle", "printer"].map((n) => (
              <Tool key={n} name={n} />
            ))}
          </div>
          <div className="ml-[1px] mr-[3px]"><Grip /></div>
          <div className="flex">
            {["av", "calc", "tower", "docLens", "table", "docLines", "lineChart", "bars", "docArrow", "info", "two", "money", "wallet"].map((n) => (
              <Tool key={n} name={n} />
            ))}
          </div>
          <div className="ml-[6px] mr-[2px]"><Grip /></div>
          <Combo label="Viste Personali" wide />
          <div className="ml-[5px] mr-[1px]"><Grip /></div>
          <div className="ml-[2px] flex">
            {["news", "globe", "medal", "list"].map((n) => (
              <Tool key={n} name={n} />
            ))}
          </div>
          <div className="ml-[4px] mr-[2px]"><Grip /></div>
          <Tool name="back" />
          <Combo label="1" />
          <Tool name="forward" />
          <div className="ml-[2px] mr-[1px]"><Grip /></div>
          <div className="flex">
            {["window", "mail", "wallet", "arrows", "blocks", "docFigure", "trash", "pencil", "pGray", "sGray", "smGray", "lGray", "folderArrow"].map((n, i) => (
              <Tool key={`${n}${i}`} name={n} />
            ))}
          </div>
        </div>
        <div className="mt-[4px] flex h-[23px] items-center pl-[7px]">
          <Grip />
          <div className="ml-[3px] flex h-[23px] w-[234px] items-center bg-black pl-[1px] text-[11.5px]">
            <StripCell label="Liq. Disp." value="0,00" />
            <StripCell label="P/L Reale" value="0,00" />
            <StripCell label="P/L Pot." value="0,00" />
          </div>
        </div>
      </div>

      {/* document window */}
      <div className="flex min-h-0 flex-1 flex-col border-t border-[#b8b8b8] pt-[5px]">
        <div className="flex h-[14px] shrink-0 items-center bg-linear-to-b from-black to-[#8a8a8a] pl-[9px] text-[11.5px] text-white">
          <svg width={10} height={11}><path d="M0 2h10M0 5h10M0 8h10" stroke="#fff" strokeWidth="1.300" /></svg>
          <span className="ml-[3px] h-[9px] w-[9px] rounded-full bg-[#10e010]" />
          <svg width={10} height={12} viewBox="0 0 10 12" className="ml-[3px]"><path d="M1 0l8 6-8 6 3-6z" fill="#7a1a8a" /></svg>
          <span className="ml-[4px]">Grafico IDEM.FIBL9 15 Min</span>
          <div className="ml-auto mr-[5px] flex w-[92px] items-center justify-between bg-[#c8c8c8] px-[1px]">
            {[
              <path key="a" d="M2 11l8-8" stroke="#f04040" strokeWidth="1.400" />,
              <text key="b" x="2" y="11" fontSize="12" fontFamily="Liberation Serif" fill="#000">T</text>,
              <path key="c" d="M3 3v8" stroke="#10c010" strokeWidth="1.600" />,
              <rect key="d" x="2" y="3" width="9" height="8" fill="none" stroke="#333" />,
              <path key="e" d="M2 4l5 5 5-5" fill="none" stroke="#333" strokeWidth="2.400" />,
              <path key="f" d="M3 6l4-4 4 4M3 9l4 4 4-4" fill="none" stroke="#333" strokeWidth="2" />,
              <path key="g" d="M2 2l9 9M11 2l-9 9" stroke="#a00000" strokeWidth="3" />,
            ].map((p, i) => (
              <svg key={i} width={13} height={14} viewBox="0 0 14 14">{p}</svg>
            ))}
          </div>
        </div>

        <div className="flex min-h-0 flex-1">
          <div className="w-[7px] shrink-0 border-l-2 border-[#a0a0a0] bg-[#f0f0f0]" />
          <div className="flex w-[1844px] shrink-0 flex-col">
            <ChartHeader title="Prezzi" />
            <PriceChart />
            <div className="h-[2px] bg-[#b8c8d8]" />
            <ChartHeader title="Volumi" />
            <VolumeChart />
            <div className="flex h-[18px] items-start text-[11.5px] text-black">
              <div className="flex h-[17px] w-[74px] items-center gap-[6px] rounded-b-[3px] border-x border-b border-[#999] bg-white pl-[11px]">
                Pagina 1
                <svg width={8} height={8}><path d="M1 1l6 6M7 1l-6 6" stroke="#555" strokeWidth="1.800" /></svg>
              </div>
              <div className="flex h-[17px] w-[24px] items-center justify-center border-b border-r border-[#999]">
                <svg width={14} height={14}>
                  <rect x="3" y="3" width="10" height="10" fill="#dfe9f2" stroke="#567" />
                  <circle cx="3" cy="3" r="2.500" fill="#f0a020" />
                </svg>
              </div>
            </div>
          </div>

          {/* drawing tools */}
          <div className="flex w-[61px] shrink-0 flex-col border-l-2 border-[#8a8a8a] border-b border-b-[#777] border-r border-r-[#777]">
            <div className="mt-[2px] flex h-[14px] shrink-0 items-center justify-between bg-[#0a64c8] px-[4px] text-[11px] text-white">
              Toolbar
              <svg width={10} height={12}><path d="M3 1h4v6h2v1H1V7h2zM5 8v4" fill="#fff" stroke="#fff" strokeWidth="0.500" /></svg>
            </div>
            <Group title="Puntatori" active="pointer" names={["pointer", "pointerTip", "pointerTop", "pointerLeft", "pointerCorner", "zoom", "select"]} />
            <Group title="Ordini" names={["av"]} />
            <Group
              title="Linee"
              names={["line", "hline", "channel", "hchannel", "supres", "zig", "rect", "ellipse", "bigA", "cross", "eraseY", "eraseX", "up", "down", "wave", "redBands", "blueBands"]}
            />
            <Group title="Fibonacci" names={["levels", "fibo", "fan", "arcs", "time"]} />
            <Group title="Gann" names={["levels", "gan", "fan"]} />
          </div>
          <div className="ml-[2px] w-[2px] shrink-0 bg-[#404040]" />
        </div>

        <div className="h-[7px] shrink-0 bg-linear-to-b from-[#f0f0f0] via-[#444] to-[#d8d8d8]" />
      </div>

      {/* status bar */}
      <div className="flex h-[18px] shrink-0 items-center bg-[#f0f0f0] text-[11.5px]">
        <div className="ml-[1px] flex h-[18px] w-[54px] items-center bg-[#333] pl-[8px] text-white">Piano 1</div>
        <svg width={14} height={14} className="ml-[6px]">
          <rect x="3" y="3" width="10" height="10" fill="#dfe9f2" stroke="#567" />
          <circle cx="3" cy="3" r="2.500" fill="#f0a020" />
        </svg>
        <div className="ml-[120px] mr-[1px]"><Grip h={14} /></div>
        <Ticker className="w-[541px] bg-[#c0ffc0]" />
        <Ticker className="w-[542px] bg-[#ffc0c0]" />
        <Ticker className="w-[540px] bg-[#c0c0ff]" text="11:56:22.00 B.P.Bari: Bankitalia, se liquidata ricadute assai rilevanti" />
        <svg width={28} height={14} viewBox="0 0 28 14" className="ml-[3px]">
          <path d="M1 5h3l4-4v12l-4-4H1z" fill="#1a5aa8" />
          <circle cx="20" cy="7" r="5.500" fill="#2a6ad0" />
          <path d="M14 2a7 7 0 0 0 0 10" fill="none" stroke="#20a030" strokeWidth="1.500" />
        </svg>
        <span className="ml-[9px]">11:57:10</span>
      </div>
    </div>
  );
}

function Ticker({ className, text }: { className: string; text?: string }) {
  return (
    <div className={`flex h-[18px] items-center border-l border-[#bbb] text-[#222] ${className}`}>
      <div className="flex h-[16px] w-[12px] shrink-0 items-center justify-center bg-[#f0f0f0]">
        <svg width={10} height={13} viewBox="0 0 10 13">
          <path d="M5 0l5 6H7v7H3V6H0z" fill="#1e96ff" />
        </svg>
      </div>
      {text && <span className="ml-[3px]">{text}</span>}
    </div>
  );
}
